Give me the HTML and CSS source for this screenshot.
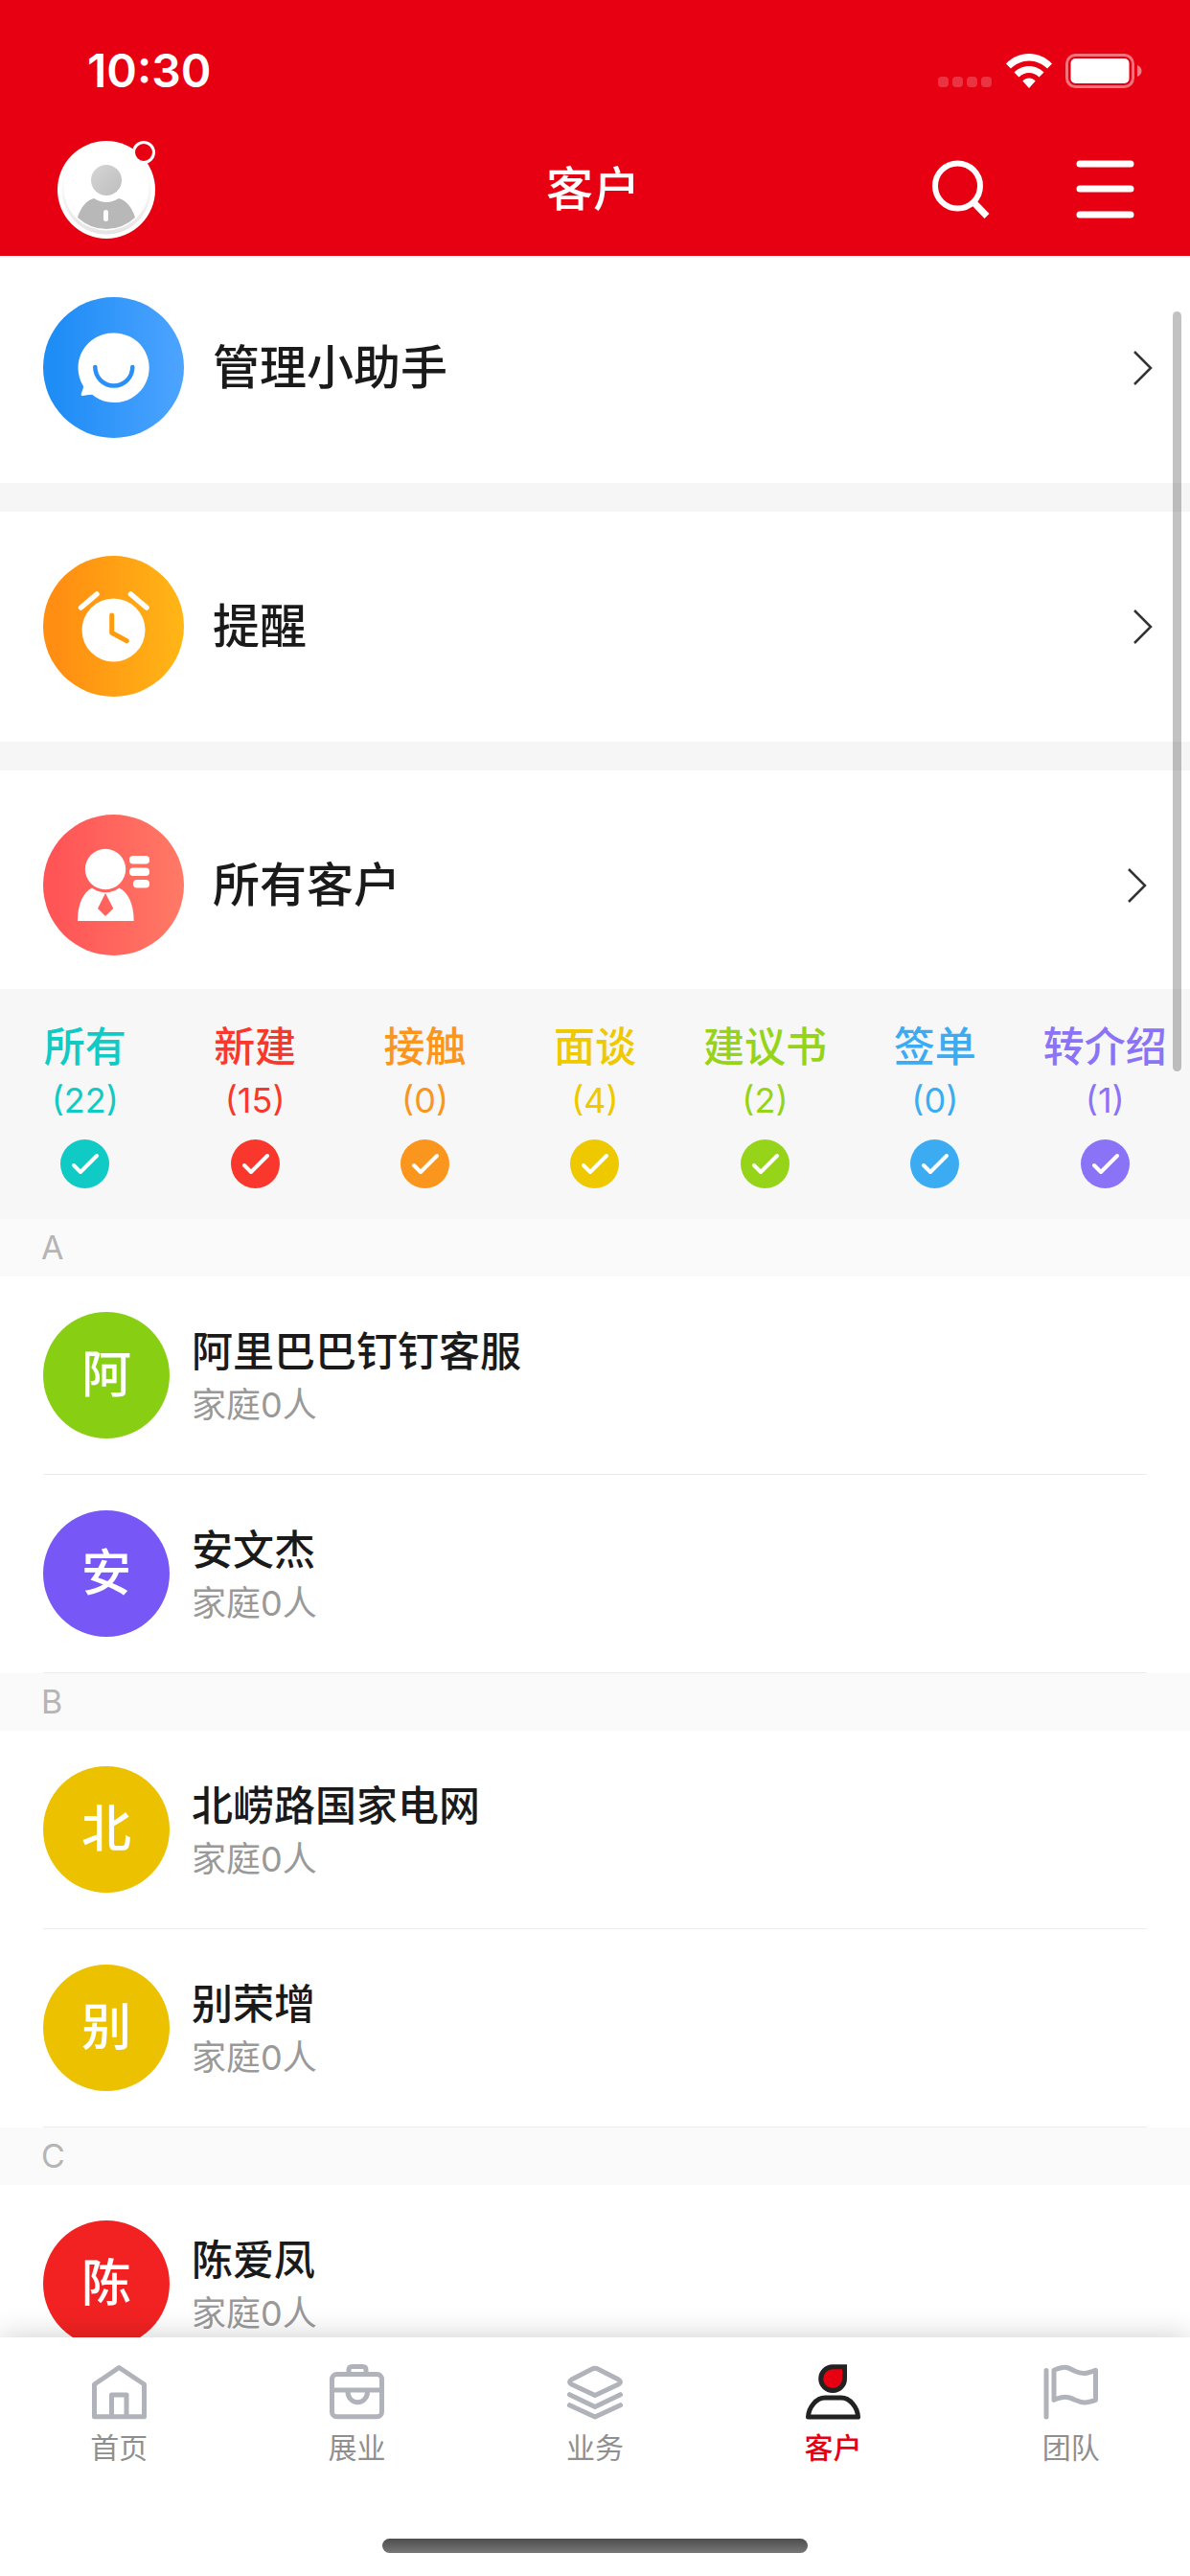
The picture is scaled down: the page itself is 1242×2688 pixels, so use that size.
FILE: index.html
```html
<!DOCTYPE html>
<html lang="zh-CN">
  <head>
    <meta charset="utf-8" />
    <meta name="viewport" content="width=device-width, initial-scale=1" />
    <title>客户</title>
    <link rel="stylesheet" href="styles.css">
  </head>
  <body>
    <header class="header">
      <div class="status-bar">
        <span class="time">10:30</span>
        <div class="status-icons">
          <svg class="signal" width="57" height="12" viewBox="0 0 57 12">
            <rect x="0" y="0" width="11" height="11" rx="4" />
            <rect x="15" y="0" width="11" height="11" rx="4" />
            <rect x="30" y="0" width="11" height="11" rx="4" />
            <rect x="45" y="0" width="11" height="11" rx="4" />
          </svg>
          <svg width="48" height="36" viewBox="0 0 48 36" fill="#fff">
            <path d="M24 0C15 0 6.500 3.500 0 10.500l5 5C10 10.500 17 7.500 24 7.500s14 3 19 8l5-5C41.500 3.500 33 0 24 0z" />
            <path d="M24 13c-6 0-11.500 2.500-15.500 6.500l5 5c3-3 6.500-4.500 10.500-4.500s7.500 1.500 10.500 4.500l5-5C35.500 15.500 30 13 24 13z" />
            <path d="M24 25.500c-2.500 0-5 1-6.700 3L24 36l6.700-7.500c-1.700-2-4.200-3-6.700-3z" />
          </svg>
          <svg width="80" height="36" viewBox="0 0 80 36">
            <rect x="1.500" y="1.500" width="69" height="33" rx="9" fill="none" stroke="#fff" stroke-opacity="0.45" stroke-width="3" />
            <rect x="5.500" y="5" width="61" height="26" rx="5" fill="#fff" />
            <path d="M75 12c3 1 4.500 3.500 4.500 6s-1.500 5-4.500 6z" fill="#fff" fill-opacity="0.5" />
          </svg>
        </div>
      </div>
      <div class="nav-bar">
        <button class="avatar" aria-label="我的">
          <svg width="102" height="102" viewBox="0 0 102 102">
            <defs>
              <linearGradient id="gray" x1="0" y1="0" x2="1" y2="1">
                <stop offset="0" stop-color="#d6d6d6" />
                <stop offset="1" stop-color="#bdbdbd" />
              </linearGradient>
              <linearGradient id="ring" x1="0" y1="0" x2="0" y2="1">
                <stop offset="0.300" stop-color="#fff" />
                <stop offset="1" stop-color="#e4e4e4" />
              </linearGradient>
            </defs>
            <circle cx="51" cy="51" r="51" fill="#fff" />
            <circle cx="51" cy="51" r="46.500" fill="url(#ring)" />
            <circle cx="51" cy="49" r="44.500" fill="#fff" />
            <circle cx="51" cy="41" r="16" fill="url(#gray)" />
            <path d="M38 60q13 8 26 0c8 2 14 10 17 20Q68 92 51 92T21 80c3-10 9-18 17-20z" fill="#b8b8b8" />
            <rect x="48" y="72" width="5" height="12" rx="2.500" fill="#fff" />
          </svg>
          <span class="badge"></span>
        </button>
        <h1 class="title">客户</h1>
        <div class="actions">
          <button aria-label="搜索">
            <svg width="62" height="62" viewBox="0 0 62 62" fill="none" stroke="#fff" stroke-width="6">
              <circle cx="27.500" cy="27" r="23.500" />
              <path d="M43.500 43.500L58 58.500" stroke-width="7" />
            </svg>
          </button>
          <button aria-label="菜单">
            <svg width="62" height="62" viewBox="0 0 62 62" stroke="#fff" stroke-width="7" stroke-linecap="round">
              <path d="M5 4h53M5 30h53M5 57h53" />
            </svg>
          </button>
        </div>
      </div>
    </header>

    <main class="content">
      <div class="scrollbar"></div>

      <a href="#" class="entry">
        <svg class="entry-icon" viewBox="0 0 147 147">
          <defs>
            <linearGradient id="blue"><stop offset="0.100" stop-color="#1f8df6" /><stop offset="1" stop-color="#4da4ff" /></linearGradient>
          </defs>
          <circle cx="73.500" cy="73.500" r="73.500" fill="url(#blue)" />
          <path d="M73.700 37.500a36.300 36.300 0 1 1-22.500 64.200c-4 0-7 1-11 1.200-2-1 2-6 1.800-9.900a36.300 36.300 0 0 1 31.700-55.500z" fill="#fff" />
          <path d="M54.300 73a19.500 19.500 0 0 0 39 0" fill="none" stroke="#2a90f8" stroke-width="4.500" stroke-linecap="round" />
        </svg>
        <span class="entry-name">管理小助手</span>
        <svg class="arrow" viewBox="0 0 22 38"><path d="M3 2l17 17L3 36" /></svg>
      </a>

      <a href="#" class="entry">
        <svg class="entry-icon" viewBox="0 0 147 147">
          <defs>
            <linearGradient id="orange"><stop offset="0.100" stop-color="#ff8e12" /><stop offset="1" stop-color="#ffb616" /></linearGradient>
          </defs>
          <circle cx="73.500" cy="73.500" r="73.500" fill="url(#orange)" />
          <circle cx="73.500" cy="77.500" r="33" fill="#fff" />
          <path d="M39.500 54l16.500-14M91.500 40L108 54" stroke="#fff" stroke-width="5.500" stroke-linecap="round" />
          <path d="M71.700 62v18.200l15.600 8.500" fill="none" stroke="#ff9c0e" stroke-width="5" stroke-linecap="round" stroke-linejoin="round" />
        </svg>
        <span class="entry-name">提醒</span>
        <svg class="arrow" viewBox="0 0 22 38"><path d="M3 2l17 17L3 36" /></svg>
      </a>

      <a href="#" class="entry entry-all">
        <svg class="entry-icon" viewBox="0 0 147 147">
          <defs>
            <linearGradient id="red"><stop offset="0.100" stop-color="#ff5557" /><stop offset="1" stop-color="#ff7a66" /></linearGradient>
          </defs>
          <circle cx="73.500" cy="73.500" r="73.500" fill="url(#red)" />
          <circle cx="65" cy="57" r="21.200" fill="#fff" />
          <path d="M51 76.500a24 24 0 0 0 28.500 0C88 81 94.700 92 94.700 111H36c0-19 6.500-30 15-34.500zM65 82l-8 16 8 8 8.300-8z" fill="#fff" fill-rule="evenodd" />
          <rect x="90" y="43" width="21" height="8.500" rx="4" fill="#fff" />
          <rect x="90" y="55.500" width="21" height="8.500" rx="4" fill="#fff" />
          <rect x="94" y="68" width="17" height="8.500" rx="4" fill="#fff" />
        </svg>
        <span class="entry-name">所有客户</span>
        <svg class="arrow" viewBox="0 0 22 38"><path d="M3 2l17 17L3 36" /></svg>
      </a>

      <!-- status filters -->
      <div class="filters">
        <label class="filter teal">
          <span class="filter-name">所有</span>
          <span class="filter-count">(22)</span>
          <span class="check"><input type="checkbox" checked /><svg viewBox="0 0 51 51"><path d="M14 27l7 7 17-17" /></svg></span>
        </label>
        <label class="filter red">
          <span class="filter-name">新建</span>
          <span class="filter-count">(15)</span>
          <span class="check"><input type="checkbox" checked /><svg viewBox="0 0 51 51"><path d="M14 27l7 7 17-17" /></svg></span>
        </label>
        <label class="filter orange">
          <span class="filter-name">接触</span>
          <span class="filter-count">(0)</span>
          <span class="check"><input type="checkbox" checked /><svg viewBox="0 0 51 51"><path d="M14 27l7 7 17-17" /></svg></span>
        </label>
        <label class="filter yellow">
          <span class="filter-name">面谈</span>
          <span class="filter-count">(4)</span>
          <span class="check"><input type="checkbox" checked /><svg viewBox="0 0 51 51"><path d="M14 27l7 7 17-17" /></svg></span>
        </label>
        <label class="filter green">
          <span class="filter-name">建议书</span>
          <span class="filter-count">(2)</span>
          <span class="check"><input type="checkbox" checked /><svg viewBox="0 0 51 51"><path d="M14 27l7 7 17-17" /></svg></span>
        </label>
        <label class="filter blue">
          <span class="filter-name">签单</span>
          <span class="filter-count">(0)</span>
          <span class="check"><input type="checkbox" checked /><svg viewBox="0 0 51 51"><path d="M14 27l7 7 17-17" /></svg></span>
        </label>
        <label class="filter purple">
          <span class="filter-name">转介绍</span>
          <span class="filter-count">(1)</span>
          <span class="check"><input type="checkbox" checked /><svg viewBox="0 0 51 51"><path d="M14 27l7 7 17-17" /></svg></span>
        </label>
      </div>

      <!-- client list -->
      <h2 class="letter">A</h2>
      <ul class="list">
        <li class="client">
          <span class="circle bg-green">阿</span>
          <div class="info">
            <p class="name">阿里巴巴钉钉客服</p>
            <p class="family">家庭0人</p>
          </div>
        </li>
        <li class="client">
          <span class="circle bg-purple">安</span>
          <div class="info">
            <p class="name">安文杰</p>
            <p class="family">家庭0人</p>
          </div>
        </li>
      </ul>
      <h2 class="letter">B</h2>
      <ul class="list">
        <li class="client">
          <span class="circle bg-yellow">北</span>
          <div class="info">
            <p class="name">北崂路国家电网</p>
            <p class="family">家庭0人</p>
          </div>
        </li>
        <li class="client">
          <span class="circle bg-yellow">别</span>
          <div class="info">
            <p class="name">别荣增</p>
            <p class="family">家庭0人</p>
          </div>
        </li>
      </ul>
      <h2 class="letter">C</h2>
      <ul class="list">
        <li class="client">
          <span class="circle bg-red">陈</span>
          <div class="info">
            <p class="name">陈爱凤</p>
            <p class="family">家庭0人</p>
          </div>
        </li>
      </ul>
    </main>

    <footer class="footer">
      <nav class="tabs">
        <a href="#" class="tab">
          <svg viewBox="0 0 60 60">
            <path d="M4.500 22L30.300 4.500 56.500 22v33.800h-52zM22.500 55.500V33h15.500v22.500" />
          </svg>
          首页
        </a>
        <a href="#" class="tab">
          <svg viewBox="0 0 60 60">
            <rect x="3.500" y="11.500" width="52" height="44.300" rx="5" />
            <path d="M21 11V7q0-3.500 3.500-3.500h11Q39 3.500 39 7v4M3.500 28h52M20 30a10 10.500 0 0 0 20.500 0" />
          </svg>
          展业
        </a>
        <a href="#" class="tab">
          <svg viewBox="0 0 60 60">
            <path d="M27 6q3-1.700 6 0l21.500 11q4 2.500 0 5L30 33.500 5.500 22q-4-2.500 0-5zM3.500 32.700L30 45.500l26.500-12.800M3.500 43.700L30 56l26.500-12.300" />
          </svg>
          业务
        </a>
        <a href="#" class="tab active">
          <svg viewBox="0 0 60 60">
            <path d="M42.500 3.800H30A12.400 12.400 0 1 0 42.500 16z" fill="#e60012" stroke-linejoin="miter" />
            <path d="M22 36h17c9 0 17 10 17.500 20H4.500C5 46 13 36 22 36z" />
          </svg>
          客户
        </a>
        <a href="#" class="tab">
          <svg viewBox="0 0 60 60">
            <path d="M4 7.500V56M12 7.300c13-5.500 15-2.500 22 1 8 3.500 12 2.500 21.500-1v31c-9.500 3.500-14 3.500-21.500 0-8-4-12-4-22 0z" />
          </svg>
          团队
        </a>
      </nav>
      <div class="home-indicator"></div>
    </footer>
  </body>
</html>
```
FILE: styles.css
```css
* {
  box-sizing: border-box;
  margin: 0;
  padding: 0;
}

body {
  font-family: Inter, "Noto Sans CJK SC", sans-serif;
  height: 100vh;
  display: flex;
  flex-direction: column;
  background-color: #fff;
  color: #1a1a1a;
  overflow: hidden;
}

a {
  color: inherit;
  text-decoration: none;
}

button {
  background: none;
  border: none;
  cursor: pointer;
}

svg {
  display: block;
}

/* header */
.header {
  flex: none;
  background-color: #e60012;
  color: #fff;
  padding-bottom: 18px;
}

.status-bar {
  display: flex;
  justify-content: space-between;
  align-items: center;
  height: 147px;
  padding: 0 50px 0 91px;
}

.time {
  font-size: 48px;
  line-height: 60px;
  font-weight: 600;
}

.status-icons {
  display: flex;
  align-items: flex-end;
  gap: 14px;
}

.signal {
  fill: #fff;
  fill-opacity: 0.2;
}

.nav-bar {
  display: grid;
  grid-template-columns: 1fr auto 1fr;
  align-items: center;
  padding: 0 58px 0 54px;
}

.avatar {
  position: relative;
  width: 102px;
  height: 102px;
  margin-left: 6px;
}

.badge {
  position: absolute;
  top: 0;
  right: 0;
  width: 24px;
  height: 24px;
  border: 3px solid #fff;
  border-radius: 50%;
  background-color: #e60012;
}

.title {
  font-size: 49px;
  line-height: 60px;
  font-weight: 500;
}

.actions {
  display: flex;
  justify-content: flex-end;
  gap: 88px;
}

/* content */
.content {
  position: relative;
  flex: 1;
  min-height: 0;
  overflow: hidden;
}

.scrollbar {
  position: absolute;
  top: 58px;
  right: 9px;
  width: 9px;
  height: 793px;
  border-radius: 5px;
  background-color: rgba(0, 0, 0, 0.24);
}

.entry {
  display: flex;
  align-items: center;
  padding: 46px 39px 47px 45px;
  border-bottom: 30px solid #f6f6f6;
}

.entry:first-of-type {
  padding-top: 43px;
}

.entry-all {
  padding-right: 45px;
  padding-bottom: 35px;
  border-bottom: none;
}

.entry-icon {
  width: 147px;
  height: 147px;
}

.entry-name {
  flex: 1;
  margin-left: 30px;
  font-size: 49px;
  line-height: 60px;
  font-weight: 500;
}

.arrow {
  width: 22px;
  height: 38px;
  fill: none;
  stroke: #333;
  stroke-width: 2.5;
}

.filters {
  display: grid;
  grid-template-columns: repeat(7, 1fr);
  padding: 32px 0;
  background-color: #f7f7f7;
}

.filter {
  display: flex;
  flex-direction: column;
  align-items: center;
  white-space: nowrap;
}

.filter-name {
  font-size: 43px;
  line-height: 56px;
  font-weight: 500;
}

.filter-count {
  font-size: 36px;
  line-height: 56px;
}

.check {
  display: grid;
  margin-top: 13px;
}

.check input,
.check svg {
  grid-area: 1 / 1;
  width: 51px;
  height: 51px;
}

.check input {
  appearance: none;
  border-radius: 50%;
  color: inherit;
  background-color: #ddd;
}

.check input:checked {
  background-color: currentColor;
}

.check svg {
  pointer-events: none;
  fill: none;
  stroke: #fff;
  stroke-width: 4;
  stroke-linecap: round;
  stroke-linejoin: round;
}

.teal {
  color: #0fcac5;
}

.red {
  color: #fa372d;
}

.orange {
  color: #fa961e;
}

.yellow {
  color: #efc900;
}

.green {
  color: #96d41a;
}

.blue {
  color: #3cacf2;
}

.purple {
  color: #8b73f7;
}

.letter {
  padding-left: 43px;
  font-size: 34px;
  line-height: 60px;
  font-weight: 400;
  color: #b5b5b5;
  background-color: #fafafa;
}

.list {
  list-style: none;
  padding: 0 45px;
}

.client {
  display: flex;
  align-items: center;
  gap: 23px;
  padding: 37px 0;
  border-bottom: 1px solid #ececec;
}

.circle {
  width: 132px;
  border-radius: 50%;
  font-size: 52px;
  line-height: 132px;
  font-weight: 500;
  text-align: center;
  color: #fff;
}

.bg-green {
  background-color: #88cf14;
}

.bg-purple {
  background-color: #7757f5;
}

.bg-yellow {
  background-color: #ebc100;
}

.bg-red {
  background-color: #f32222;
}

.info {
  padding-top: 6px;
  line-height: 56px;
}

.name {
  font-size: 43px;
  font-weight: 500;
}

.family {
  font-size: 36px;
  color: #999;
}

/* bottom tabs */
.footer {
  position: relative;
  flex: none;
  padding: 27px 0 24px;
  background-color: #fff;
  box-shadow: 0 0 30px rgba(0, 0, 0, 0.2);
}

.tabs {
  display: grid;
  grid-template-columns: repeat(5, 1fr);
}

.tab {
  display: flex;
  flex-direction: column;
  align-items: center;
  gap: 8px;
  font-size: 30px;
  line-height: 40px;
  color: #8f8f8f;
}

.tab svg {
  width: 60px;
  height: 60px;
  fill: none;
  stroke: #b0b3ba;
  stroke-width: 5;
  stroke-linecap: round;
  stroke-linejoin: round;
}

.tab.active {
  color: #e60012;
  font-weight: 500;
}

.tab.active svg {
  stroke: #222;
}

.home-indicator {
  width: 444px;
  height: 15px;
  margin: 75px auto 0;
  border-radius: 8px;
  background: linear-gradient(#4d4d4d, #777);
}
```
